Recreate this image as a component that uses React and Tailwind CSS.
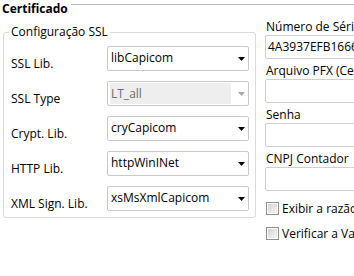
import React from "react";

const sslRows = [
  { label: "SSL Lib.", value: "libCapicom" },
  { label: "SSL Type", value: "LT_all", disabled: true },
  { label: "Crypt. Lib.", value: "cryCapicom" },
  { label: "HTTP Lib.", value: "httpWinINet" },
  { label: "XML Sign. Lib.", value: "xsMsXmlCapicom" },
];

const fields = [
  { label: "Número de Série", value: "4A3937EFB1666E2B" },
  { label: "Arquivo PFX (Certificado)", value: "" },
  { label: "Senha", value: "" },
  { label: "CNPJ Contador", value: "" },
];

const checks = ["Exibir a razão social do certificado", "Verificar a Validade"];

// small dropdown arrow
const Arrow = ({ disabled }) => (
  <svg width="7" height="4" viewBox="0 0 7 4" className="shrink-0">
    <polygon points="0,0 7,0 3.5,4" fill={disabled ? "#a8a8a8" : "#000"} />
  </svg>
);

const Combo = ({ value, disabled }) => (
  <div className="w-[142px] h-[25px] shrink-0 border border-[#c9c9c9] rounded-[2px] bg-white flex items-center pr-[3px]">
    {disabled ? (
      <div className="ml-[2px] w-[121px] h-[21px] bg-[#eeeeee] flex items-center pl-[1px] pb-[1px] text-[#6d6d6d] leading-[15px]">
        {value}
      </div>
    ) : (
      <span className="flex-1 pl-[3px] pb-[2px] leading-[15px] whitespace-nowrap">
        {value}
      </span>
    )}
    {disabled && <div className="flex-1" />}
    <Arrow disabled={disabled} />
  </div>
);

const App = () => {
  return (
    <div className="relative w-[354px] h-[276px] overflow-hidden bg-white text-[12px] text-black font-['Segoe_UI','Open_Sans',sans-serif]">
      {/* outer group title */}
      <div className="flex items-start h-[16px] pl-[2px] pt-[2px]">
        <span className="font-bold leading-[14px]">Certificado</span>
        <div className="flex-1 h-px bg-[#b9b9b9] mt-[2px] ml-[3px]" />
      </div>

      <div className="flex items-start">
        {/* Configuração SSL group */}
        <div className="relative shrink-0 ml-[3px] mt-[16px] w-[253px] h-[186px] border border-[#dadada] rounded-[3px] pl-[7px] pt-[13px]">
          <span className="absolute left-[5px] -top-[9px] bg-white px-[2px] leading-[16px]">
            Configuração SSL
          </span>
          <div className="flex flex-col gap-[10px]">
            {sslRows.map((row) => (
              <div key={row.label} className="flex items-start h-[25px]">
                <span className="w-[96px] shrink-0 pt-[10px] leading-[15px] whitespace-nowrap">
                  {row.label}
                </span>
                <Combo value={row.value} disabled={row.disabled} />
              </div>
            ))}
          </div>
        </div>

        {/* right column */}
        <div className="ml-[9px] mt-[3px] flex flex-col w-[140px] shrink-0">
          <div className="flex flex-col gap-[4px]">
            {fields.map((f) => (
              <div key={f.label} className="flex flex-col">
                <span className="h-[15px] leading-[15px] pl-[1px] whitespace-nowrap">
                  {f.label}
                </span>
                <div className="mt-[1px] h-[24px] border border-[#cfcfcf] rounded-[2px] flex items-center pl-[2px] pb-[1px] leading-[15px] whitespace-nowrap overflow-hidden">
                  {f.value}
                </div>
              </div>
            ))}
          </div>
          <div className="mt-[11px] flex flex-col gap-[12px] pl-[1px]">
            {checks.map((c) => (
              <div key={c} className="flex items-center h-[13px]">
                <div className="w-[13px] h-[13px] border border-[#8f8f8f] bg-white p-[1px] shrink-0">
                  <div className="w-full h-full bg-gradient-to-br from-[#d4d4d4] to-[#f6f6f6]" />
                </div>
                <span className="ml-[3px] leading-[15px] whitespace-nowrap">{c}</span>
              </div>
            ))}
          </div>
        </div>
      </div>
    </div>
  );
};

export default App;
